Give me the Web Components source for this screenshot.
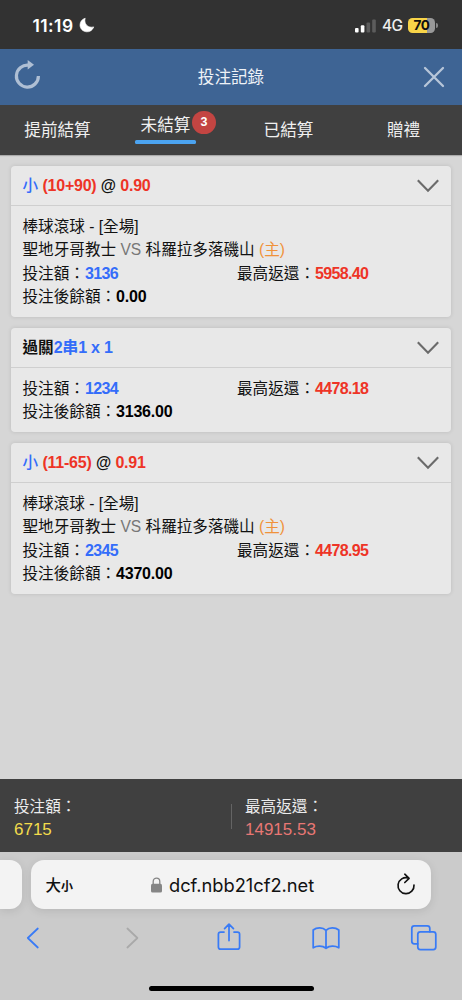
<!DOCTYPE html>
<html lang="zh-Hant">
<head>
<meta charset="utf-8">
<meta name="viewport" content="width=device-width,initial-scale=1">
<title>投注記錄</title>
<style>
html,body{margin:0;height:100%;overflow:hidden}
body{font-family:"Liberation Sans","Noto Sans CJK TC",sans-serif;background:#d6d6d6}
</style>
</head>
<body>
<bet-app></bet-app>
<script>
const define = (name, html, init) => customElements.define(name, class extends HTMLElement {
  constructor() {
    super();
    const t = document.createElement('template');
    t.innerHTML = html;
    this.attachShadow({mode: 'open'}).append(t.content.cloneNode(true));
  }
  connectedCallback() { if (init) init(this, this.shadowRoot); }
});

define('status-bar', `
<style>
:host{display:flex;height:49px;box-sizing:border-box;background:#323232;color:#fff;align-items:center;padding:2px 24px 0 32.5px;font-family:Inter,sans-serif}
.time{font-size:17.4px;font-weight:600;letter-spacing:.45px;line-height:20px;width:43px;white-space:nowrap}
.moon{margin:-1px 0 0 3.5px}
.bars{margin-left:auto}
.net{font-size:15.4px;font-weight:500;margin-left:6px;width:20px;line-height:20px;color:#eee;letter-spacing:-.6px;padding-top:1px}
.bat{margin-left:6px;width:27px;height:15px;border-radius:4.5px;background:linear-gradient(90deg,#f8d448 72%,#999 72%);color:#111;font-size:13.6px;font-weight:700;line-height:15px;text-align:center;letter-spacing:-.5px}
.cap{width:2px;height:5px;border-radius:0 2px 2px 0;background:#888;margin-left:1px}
svg{display:block}
</style>
<span class="time">11:19</span>
<svg class="moon" width="16" height="16" viewBox="0 0 16 16"><path d="M6.2 1.2C4.6 6.8 9 11.4 14.8 9.9C13.5 13.3 10.6 15.1 7.5 14.8C3.5 14.4 1 11.5 1 8C1 4.7 3.1 2.1 6.2 1.2Z" fill="#fff" stroke="#fff" stroke-width=".6"/></svg>
<svg class="bars" width="21" height="14" viewBox="0 0 21 14"><rect y="9" width="3.6" height="4.5" rx="1" fill="#fff"/><rect x="5.8" y="6.3" width="3.6" height="7.2" rx="1" fill="#fff"/><rect x="11.5" y="3.4" width="3.6" height="10.1" rx="1" fill="#5c5c5c"/><rect x="17.2" y=".5" width="3.6" height="13" rx="1" fill="#5c5c5c"/></svg>
<span class="net">4G</span><span class="bat">70</span><span class="cap"></span>`);

define('title-bar', `
<style>
:host{display:grid;grid-template-columns:56px 1fr 56px;height:56px;background:#3e6494;align-items:center;color:#eef2f7;text-align:center}
h1{margin:0;padding-top:1px;font-size:16.6px;font-weight:400;line-height:24px}
svg{display:block;margin:auto}
.refresh{margin-top:10px}
</style>
<svg class="refresh" width="30" height="32" viewBox="0 0 30 32"><path d="M16 6.2A11 11 0 1 0 25.4 17" fill="none" stroke="#afbfd4" stroke-width="3.2"/><path d="M14.7 1L21 5.7L14.7 10.4Z" fill="#afbfd4"/></svg>
<h1><slot></slot></h1>
<svg width="22" height="22" viewBox="0 0 22 22"><path d="M2 2L20 20M20 2L2 20" stroke="#b7c6d9" stroke-width="2.3" stroke-linecap="round"/></svg>`);

define('tab-item', `
<style>
:host{display:flex;align-items:center;justify-content:center;color:#f0f0f0;font-size:16.6px;line-height:24px;padding-top:1px}
.box{position:relative}
:host([active]){padding:0 15px 0 0}
:host([active]) .box{padding:0 5.5px 6px;margin-bottom:3px}
:host([active]) .box::after{content:"";display:block;position:absolute;left:0;right:0;bottom:0;height:3.5px;border-radius:1.5px;background:#4ba3f0}
.badge{display:none;position:absolute;left:57.2px;top:-3px;width:23.5px;height:23.5px;border-radius:50%;background:#c34542;color:#fff;font:700 12.5px/23.5px "Liberation Sans",sans-serif;text-align:center}
:host([count]) .badge{display:block}
</style>
<span class="box"><slot></slot><span class="badge"></span></span>`,
(el, r) => { r.querySelector('.badge').textContent = el.getAttribute('count') || ''; });

define('tab-strip', `
<style>:host{display:grid;grid-template-columns:115px 116px 115px 115px;height:50px;background:#404040;box-shadow:0 1px 1px #aaa}</style>
<slot></slot>`);

define('bet-card', `
<style>
:host{display:block;background:#e8e8e8;border-radius:4px;box-shadow:0 0 4px rgba(0,0,0,.12);font-size:15.6px;color:#111;overflow:hidden}
header{display:flex;align-items:center;justify-content:space-between;height:39.4px;padding:0 11px 0 11.5px;border-bottom:1px solid #cfcfcf;font-weight:700;white-space:nowrap}
header span{margin-top:-3px}
.body{padding:8.6px 11.5px 8.4px}
svg{display:block}
</style>
<header><span><slot name="title"></slot></span><svg width="24" height="16" viewBox="0 0 24 16"><path d="M1.8 2.2L12 12.7L22.2 2.2" fill="none" stroke="#6b6b6b" stroke-width="2.1"/></svg></header>
<div class="body"><slot></slot></div>`);

define('bet-line', `
<style>:host{display:block;height:23.4px;line-height:23.4px;white-space:nowrap}</style><slot></slot>`);

define('bet-amounts', `
<style>
:host{display:block;line-height:23.4px;white-space:nowrap}
.row{display:grid;grid-template-columns:214.5px 1fr;height:23.4px}
.after{height:23.4px}
b{font-size:16px;letter-spacing:-.65px}
.stake{color:#346dfa}.max{color:#ee3426}
.after b{letter-spacing:-.23px;color:#000}
</style>
<div class="row"><span>投注額：<b class="stake"></b></span><span>最高返還：<b class="max"></b></span></div>
<div class="after">投注後餘額：<b class="left"></b></div>`,
(el, r) => { for (const k of ['stake', 'max', 'left']) r.querySelector('.' + k).textContent = el.getAttribute(k); });

define('total-item', `
<style>
:host{display:block;font-size:15.6px;line-height:23px;color:#ececec}
div{color:var(--amount);font-size:17px;line-height:23px}
</style><slot></slot><div><slot name="amount"></slot></div>`);

define('totals-bar', `
<style>
:host{display:grid;grid-template-columns:217px 14px 1fr;align-items:center;height:73px;box-sizing:border-box;background:#404040;padding:5px 0 0 14px}
i{width:1px;height:25px;background:#646464;margin-top:-4px}
</style>
<slot name="stake"></slot><i></i><slot name="max"></slot>`);

define('browser-bar', `
<style>
:host{display:block;height:148px;background:#cbcbcb;font-family:Inter,"Noto Sans CJK TC",sans-serif;color:#111;overflow:hidden}
.tabs{display:flex;gap:9px;padding-top:8px}
.prev{width:22px;height:49px;background:#f3f3f3;border-radius:0 12px 12px 0;box-shadow:0 2px 10px rgba(0,0,0,.1)}
.address{display:flex;align-items:center;box-sizing:border-box;width:400px;height:49px;background:#f3f3f3;border-radius:13px;padding:0 15px 0 14.5px;box-shadow:0 2px 10px rgba(0,0,0,.1)}
.size{font-family:"Noto Sans CJK TC",sans-serif;font-size:15.5px;font-weight:500;line-height:24px;width:105px;white-space:nowrap}
.size small{font-size:12px;font-weight:700}
.url{font-size:18.3px;letter-spacing:-.02px;margin-left:7.5px;line-height:24px;white-space:nowrap}
.reload{margin:-2px 0 0 auto}
nav{display:grid;grid-template-columns:66px 132px 61px 133px 64px;height:60px;align-items:center;justify-items:center}
nav svg{fill:none;stroke:#397bf6;stroke-width:1.75;stroke-linejoin:round;stroke-linecap:round;margin-top:-3px}
svg{display:block}
.share{margin-top:-4px}
.home{width:165px;height:5.5px;border-radius:3px;background:#000;margin:16.5px auto 0}
</style>
<div class="tabs"><div class="prev"></div><div class="address">
<span class="size">大<small>小</small></span>
<svg width="11" height="16" viewBox="0 0 11 16"><rect y="6.8" width="11" height="8.7" rx="1.6" fill="#858585"/><path d="M2.2 7V4.4C2.2-.1 8.8-.1 8.8 4.4V7" fill="none" stroke="#858585" stroke-width="1.3"/></svg>
<span class="url">dcf.nbb21cf2.net</span>
<svg class="reload" width="20" height="22" viewBox="0 0 20 22"><path d="M12.2 4.9A8 8 0 1 0 18 12M8.8 1.2L13.1 5.3L8.8 9.5" fill="none" stroke="#111" stroke-width="1.65" stroke-linecap="round" stroke-linejoin="round"/></svg>
</div></div>
<nav>
<svg width="14" height="22" viewBox="0 0 14 22"><path d="M11.8 1.5L1.8 11L11.8 20.5"/></svg>
<svg width="14" height="22" viewBox="0 0 14 22" style="stroke:#a9a9a9"><path d="M2.4 1.5L12.4 11L2.4 20.5"/></svg>
<svg class="share" width="24" height="28" viewBox="0 0 24 28"><path d="M7 9.1H3.6Q1.4 9.1 1.4 11.3V24Q1.4 26.2 3.6 26.2H20.4Q22.6 26.2 22.6 24V11.3Q22.6 9.1 20.4 9.1H17M12 17.5V1.3M7.6 5.6L12 1.1L16.4 5.6"/></svg>
<svg width="28" height="24" viewBox="0 0 28 24"><path d="M14 4.3C10.8 1.1 4.8 1.1 1.2 4V21.8C5 19.6 10.4 19.6 14 22.3C17.6 19.6 23 19.6 26.8 21.8V4C23.2 1.1 17.2 1.1 14 4.3V22"/></svg>
<svg width="28" height="28" viewBox="0 0 28 28"><path d="M7.8 19.8H4.3Q1.8 19.8 1.8 17.3V4.3Q1.8 1.8 4.3 1.8H17.3Q19.8 1.8 19.8 4.3V7.8"/><rect x="7.8" y="7.8" width="18" height="17.8" rx="2.5"/></svg>
</nav>
<div class="home"></div>`);

define('bet-app', `
<style>
:host{display:flex;flex-direction:column;width:462px;height:1000px;background:#d6d6d6}
.list{flex:1;display:flex;flex-direction:column;gap:11px;padding:11px 11px 0;min-height:0}
.red,.blue{font-size:16px;letter-spacing:-.23px}
.red{color:#ee3426}.blue{color:#346dfa}.light{font-weight:500;font-size:15.6px;letter-spacing:0}.vs{color:#777}.home{color:#f0923a}
</style>
<status-bar></status-bar>
<title-bar>投注記錄</title-bar>
<tab-strip><tab-item>提前結算</tab-item><tab-item active count="3">未結算</tab-item><tab-item>已結算</tab-item><tab-item>贈禮</tab-item></tab-strip>
<div class="list">
<bet-card><span slot="title"><span class="blue light">小</span> <span class="red">(10+90)</span> @ <span class="red">0.90</span></span>
<bet-line>棒球滾球 - [全場]</bet-line><bet-line>聖地牙哥教士 <span class="vs">VS</span> 科羅拉多落磯山 <span class="home">(主)</span></bet-line>
<bet-amounts stake="3136" max="5958.40" left="0.00"></bet-amounts></bet-card>
<bet-card><span slot="title">過關<span class="blue">2串1 x 1</span></span>
<bet-amounts stake="1234" max="4478.18" left="3136.00"></bet-amounts></bet-card>
<bet-card><span slot="title"><span class="blue light">小</span> <span class="red">(11-65)</span> @ <span class="red">0.91</span></span>
<bet-line>棒球滾球 - [全場]</bet-line><bet-line>聖地牙哥教士 <span class="vs">VS</span> 科羅拉多落磯山 <span class="home">(主)</span></bet-line>
<bet-amounts stake="2345" max="4478.95" left="4370.00"></bet-amounts></bet-card>
</div>
<totals-bar><total-item slot="stake" style="--amount:#f3dc4c">投注額：<span slot="amount">6715</span></total-item><total-item slot="max" style="--amount:#e87774">最高返還：<span slot="amount">14915.53</span></total-item></totals-bar>
<browser-bar></browser-bar>`);
</script>
</body>
</html>
